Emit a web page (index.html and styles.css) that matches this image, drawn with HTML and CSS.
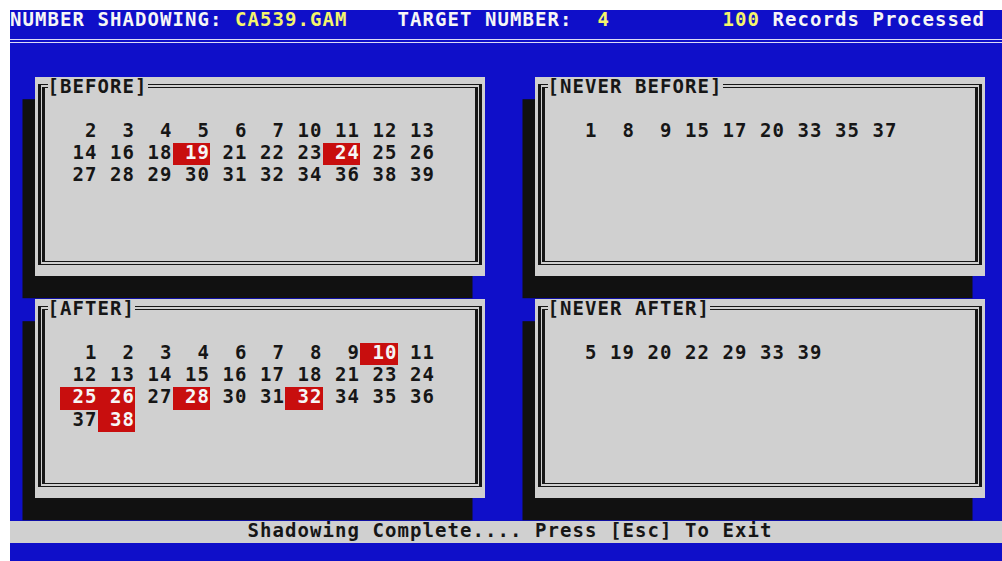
FILE: index.html
```html
<!DOCTYPE html>
<html lang="en">
<head>
<meta charset="utf-8">
<title>Number Shadowing</title>
<link rel="stylesheet" href="styles.css">
</head>
<body>
<main class="screen">
  <header class="topline"><span>NUMBER SHADOWING: </span><span class="hi">CA539.GAM</span><span>    TARGET NUMBER:  </span><span class="hi">4</span><span>         </span><span class="hi">100</span><span> Records Processed</span></header>
  <div class="rule"></div>

  <section class="windows">
    <div class="win">
      <h2 class="win-title">[BEFORE]</h2>
      <div class="nums">
        <span class="n">2</span><span class="n">3</span><span class="n">4</span><span class="n">5</span><span class="n">6</span><span class="n">7</span><span class="n">10</span><span class="n">11</span><span class="n">12</span><span class="n">13</span>
        <span class="n">14</span><span class="n">16</span><span class="n">18</span><span class="n hit">19</span><span class="n">21</span><span class="n">22</span><span class="n">23</span><span class="n hit">24</span><span class="n">25</span><span class="n">26</span>
        <span class="n">27</span><span class="n">28</span><span class="n">29</span><span class="n">30</span><span class="n">31</span><span class="n">32</span><span class="n">34</span><span class="n">36</span><span class="n">38</span><span class="n">39</span>
      </div>
    </div>

    <div class="win">
      <h2 class="win-title">[NEVER BEFORE]</h2>
      <div class="nums">
        <span class="n">1</span><span class="n">8</span><span class="n">9</span><span class="n">15</span><span class="n">17</span><span class="n">20</span><span class="n">33</span><span class="n">35</span><span class="n">37</span>
      </div>
    </div>

    <div class="win">
      <h2 class="win-title">[AFTER]</h2>
      <div class="nums">
        <span class="n">1</span><span class="n">2</span><span class="n">3</span><span class="n">4</span><span class="n">6</span><span class="n">7</span><span class="n">8</span><span class="n">9</span><span class="n hit">10</span><span class="n">11</span>
        <span class="n">12</span><span class="n">13</span><span class="n">14</span><span class="n">15</span><span class="n">16</span><span class="n">17</span><span class="n">18</span><span class="n">21</span><span class="n">23</span><span class="n">24</span>
        <span class="n hit">25</span><span class="n hit">26</span><span class="n">27</span><span class="n hit">28</span><span class="n">30</span><span class="n">31</span><span class="n hit">32</span><span class="n">34</span><span class="n">35</span><span class="n">36</span>
        <span class="n">37</span><span class="n hit">38</span>
      </div>
    </div>

    <div class="win">
      <h2 class="win-title">[NEVER AFTER]</h2>
      <div class="nums">
        <span class="n">5</span><span class="n">19</span><span class="n">20</span><span class="n">22</span><span class="n">29</span><span class="n">33</span><span class="n">39</span>
      </div>
    </div>
  </section>

  <footer class="status">Shadowing Complete.... Press [Esc] To Exit</footer>
</main>
</body>
</html>
```

FILE: styles.css
```css
/* 80x25 text-mode screen: one character cell is 12.5 x 22.2 px */
:root {
  --cw: 12.5px;
  --ch: 22.2px;
  --blue: #0f0fc9;
  --gray: #d0d0d0;
  --ink: #161616;
  --shade: #111111;
  --red: #c80e0e;
  --white: #f6f6f6;
  --yellow: #f4f46c;
  --rule: #dcdcf6;
}

html,
body {
  margin: 0;
  padding: 0;
  height: 100%;
  background: #ffffff;
  overflow: hidden;
}

.screen {
  display: block;
  margin: 10px 0 0 10px;
  width: calc(80 * var(--cw));
  height: calc(25 * var(--ch));
  background: var(--blue);
  color: var(--white);
  font-family: "DejaVu Sans Mono", "Liberation Mono", monospace;
  font-weight: bold;
  font-size: 19px;
  /* glyphs sit in the upper part of each cell */
  line-height: calc(var(--ch) - 2.4px);
  letter-spacing: 1.06px;
}

/* row 0: file / target / progress line */
.topline {
  height: var(--ch);
  white-space: pre;
}

.hi {
  color: var(--yellow);
}

/* row 1: double horizontal rule */
.rule {
  height: var(--ch);
  padding-top: 7px;
  box-sizing: border-box;
}

.rule::before {
  content: "";
  display: block;
  height: 2px;
  border-top: 1px solid var(--rule);
  border-bottom: 1px solid var(--rule);
}

/* rows 3-21: four 36x9 windows, 4 columns apart */
.windows {
  display: grid;
  grid-template-columns: repeat(2, calc(36 * var(--cw)));
  grid-auto-rows: calc(9 * var(--ch));
  column-gap: calc(4 * var(--cw));
  row-gap: var(--ch);
  margin: var(--ch) 0;
  padding-left: calc(2 * var(--cw));
}

.win {
  position: relative;
  background: var(--gray);
  color: var(--ink);
  box-shadow: calc(-1 * var(--cw)) var(--ch) 0 0 var(--shade);
}

/* double-line frame: outer and inner box */
.win::before,
.win::after {
  content: "";
  position: absolute;
  border-style: solid;
  border-color: var(--ink);
  border-width: 1px 3px;
}

.win::before {
  top: 7px;
  left: 3px;
  right: 3px;
  bottom: 11px;
}

.win::after {
  top: 10px;
  left: 7px;
  right: 7px;
  bottom: 14px;
}

.win-title {
  position: absolute;
  z-index: 1;
  top: 0;
  left: var(--cw);
  height: var(--ch);
  margin: 0;
  font: inherit;
  letter-spacing: inherit;
  white-space: pre;
  background: var(--gray);
}

.nums {
  display: grid;
  grid-template-columns: repeat(10, calc(3 * var(--cw)));
  grid-auto-rows: var(--ch);
  margin: calc(2 * var(--ch)) 0 0 calc(2 * var(--cw));
}

.n {
  text-align: right;
  white-space: pre;
}

.hit {
  background: var(--red);
  color: var(--white);
}

/* row 23: status line */
.status {
  height: var(--ch);
  background: var(--gray);
  color: var(--ink);
  text-align: center;
  white-space: pre;
}
```
